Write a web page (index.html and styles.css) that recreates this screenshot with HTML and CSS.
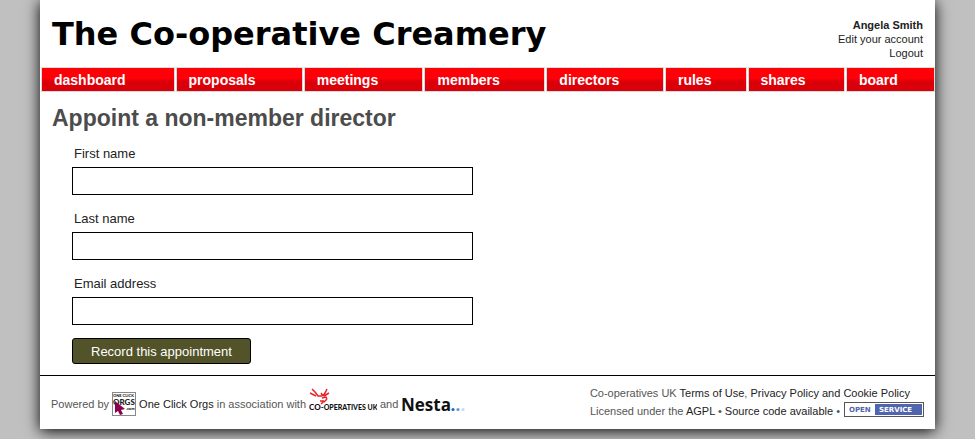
FILE: index.html
```html
<!DOCTYPE html>
<html lang="en">
<head>
<meta charset="utf-8">
<title>Appoint a non-member director</title>
<link rel="stylesheet" href="styles.css">
</head>
<body>
<div class="page">
  <header class="header">
    <h1 class="org-name">The Co-operative Creamery</h1>
    <div class="account">
      <strong>Angela Smith</strong>
      <a href="#">Edit your account</a>
      <a href="#">Logout</a>
    </div>
  </header>
  <nav>
    <ul class="tabs">
      <li><a href="#">dashboard</a></li>
      <li><a href="#">proposals</a></li>
      <li><a href="#">meetings</a></li>
      <li><a href="#">members</a></li>
      <li><a href="#">directors</a></li>
      <li><a href="#">rules</a></li>
      <li><a href="#">shares</a></li>
      <li><a href="#">board</a></li>
    </ul>
  </nav>
  <main class="content">
    <h2>Appoint a non-member director</h2>
    <form class="form">
      <label for="first">First name</label>
      <input id="first" type="text">
      <label for="last">Last name</label>
      <input id="last" type="text">
      <label for="email">Email address</label>
      <input id="email" type="text">
      <button type="button">Record this appointment</button>
    </form>
  </main>
  <footer class="footer">
    <div class="credits">
      <span>Powered by</span>
      <svg class="oco" width="24" height="24" viewBox="0 0 24 24">
        <rect x=".5" y=".5" width="23" height="23" fill="#fff" stroke="#888"/>
        <g font-family="Lato, sans-serif" font-weight="900" fill="#222">
          <text x="1" y="5" font-size="4">ONE CLICK</text>
          <text x="1" y="13" font-size="8">ORGS</text>
          <text x="14" y="18" font-size="4">.com</text>
        </g>
        <path d="M3 9v12l3-2 2 4 3-1-2-4 4-1z" fill="#8c0050"/>
      </svg>
      <span><a href="#">One Click Orgs</a> in association with</span>
      <svg class="coop" width="68" height="24" viewBox="0 0 68 24">
        <g fill="none" stroke="#e8232a" stroke-width="1.5">
          <path d="M3 1l3 3M1 5l6 3M6 4l3 4 4 0M12 5l2 3M18 1l-2 4-2 3M20 5l-5 3M13 10l4-1 1 2M18 11l-3 3M11 13l4 0M15 13l-3 3"/>
        </g>
        <text x="0" y="22" font-family="Lato, sans-serif" font-weight="900" font-size="8" fill="#111">CO-<tspan font-size="7">OPERATIVES UK</tspan></text>
      </svg>
      <span>and</span>
      <svg class="nesta" width="64" height="24" viewBox="0 0 64 24">
        <text x="0" y="19" font-family="Open Sans, sans-serif" font-weight="700" font-size="17" fill="#111">Nesta</text>
        <circle cx="52" cy="17.500" r="1.600" fill="#2467c4"/>
        <circle cx="57" cy="17.500" r="1.600" fill="#5e9bdc"/>
        <circle cx="62" cy="17.500" r="1.600" fill="#c4daf2"/>
      </svg>
    </div>
    <div class="legal">
      <div>Co-operatives UK <a href="#">Terms of Use</a>, <a href="#">Privacy Policy and Cookie Policy</a></div>
      <div class="licence">
        <span>Licensed under the <a href="#">AGPL</a> • <a href="#">Source code available</a> •</span>
        <svg width="80" height="15" viewBox="0 0 80 15">
          <rect x=".5" y=".5" width="79" height="14" fill="#fff" stroke="#555"/>
          <rect x="31" y="2" width="47" height="11" fill="#5064b0"/>
          <g font-family="DejaVu Sans, sans-serif" font-size="7" font-weight="bold">
            <text x="5" y="10" fill="#5064b0">OPEN</text>
            <text x="35" y="10" fill="#fff">SERVICE</text>
          </g>
        </svg>
      </div>
    </div>
  </footer>
</div>
</body>
</html>
```
FILE: styles.css
```css
* { box-sizing: border-box; }
body {
  margin: 0;
  padding: 0 40px 10px;
  background: #c0c0c0;
  color: #222;
  font-family: "Liberation Sans", Arial, sans-serif;
  font-size: 13px;
}
a { color: #222; text-decoration: none; }
.page { background: #fff; box-shadow: 0 2px 14px #000; }
.header {
  display: flex;
  justify-content: space-between;
  padding: 12px 12px 0;
  height: 67px;
}
.org-name {
  margin: 0;
  color: #000;
  font: bold 32px/44px "DejaVu Sans", Verdana, sans-serif;
}
.account {
  display: flex;
  flex-direction: column;
  padding-top: 6px;
  text-align: right;
  font-size: 11px;
  line-height: 14px;
}
.tabs {
  display: table;
  width: 100%;
  margin: 0;
  padding: 1px 0;
  list-style: none;
}
.tabs li { display: table-cell; padding: 0 1px 0 2px; }
.tabs a {
  display: block;
  padding: 2px 12px 0;
  background: linear-gradient(#ff0008 0 45%, #d90009 60%);
  box-shadow: 0 0 0 1px #ddd;
  color: #fff;
  font-size: 14px;
  font-weight: bold;
  line-height: 21px;
}
.content { padding: 12px 12px 11px; }
h2 {
  margin: 0 0 14px;
  color: #4c4c4c;
  font-size: 23px;
  line-height: 28px;
}
.form {
  display: flex;
  flex-direction: column;
  align-items: flex-start;
  padding-left: 20px;
}
.form label { padding-left: 2px; margin-bottom: 5px; line-height: 16px; }
.form input {
  width: 401px;
  max-width: 100%;
  height: 28px;
  margin: 0 0 16px;
  padding: 4px;
  border: 1px solid #000;
  background: #fff;
  font: inherit;
}
.form input:last-of-type { margin-bottom: 13px; }
.form button {
  height: 26px;
  padding: 0 18px;
  border: 1px solid #000;
  border-radius: 3px;
  background: #535329;
  color: #fff;
  font: inherit;
}
.footer {
  display: flex;
  justify-content: space-between;
  padding: 8px 11px 9px;
  border-top: 1px solid #000;
  color: #555;
  font-size: 11px;
}
.credits { display: flex; align-items: center; gap: 3px; padding-top: 4px; }
.coop { margin-bottom: 8px; }
.legal { line-height: 18px; }
.licence { display: flex; gap: 4px; }
```
